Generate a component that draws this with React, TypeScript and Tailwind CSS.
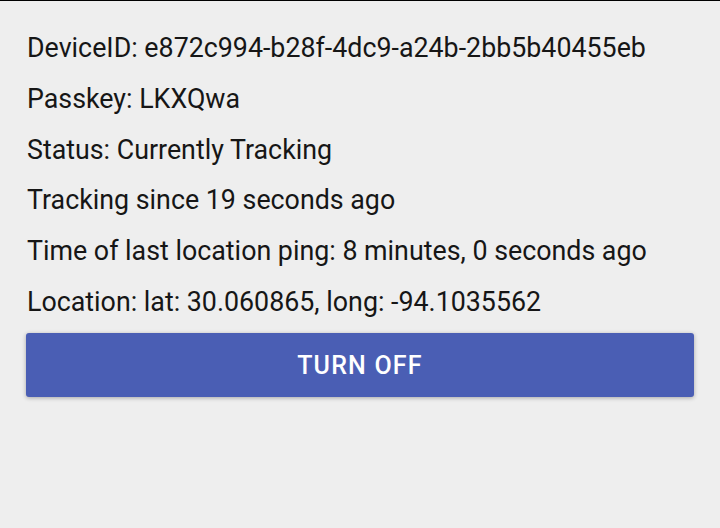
import React from "react";

export default function App() {
  const lines = [
    "DeviceID: e872c994-b28f-4dc9-a24b-2bb5b40455eb",
    "Passkey: LKXQwa",
    "Status: Currently Tracking",
    "Tracking since 19 seconds ago",
    "Time of last location ping: 8 minutes, 0 seconds ago",
    "Location: lat: 30.060865, long: -94.1035562",
  ];
  return (
    <div
      className="w-[720px] h-[528px] bg-[#eeeeee] border-t border-black overflow-hidden"
      style={{ fontFamily: "Roboto, 'Noto Sans', sans-serif" }}
    >
      <div className="pt-[22px] px-[26px]">
        {lines.map((l) => (
          <p key={l} className="text-[26.8px] leading-[50.75px] text-[#161616] pl-px whitespace-nowrap">
            {l}
          </p>
        ))}
        <button className="mt-[5.5px] w-[668px] h-[64px] rounded-[3px] bg-[#4a5eb4] text-white text-[25px] tracking-[1.2px] font-medium shadow-[0_1px_4px_rgba(0,0,0,0.3)] flex items-center justify-center pt-[2px]">
          TURN OFF
        </button>
      </div>
    </div>
  );
}
